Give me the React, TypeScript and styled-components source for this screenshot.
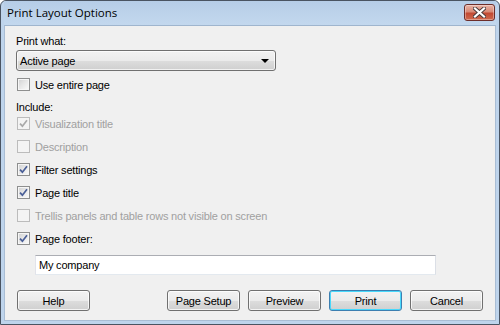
import React, { useState } from 'react';
import styled, { createGlobalStyle } from 'styled-components';

const GlobalStyle = createGlobalStyle`
  html, body {
    margin: 0;
    padding: 0;
    background: #ffffff;
  }
  * {
    box-sizing: border-box;
  }
`;

const Window = styled.div`
  width: 500px;
  height: 325px;
  display: flex;
  flex-direction: column;
  border: 1px solid #4a5462;
  border-radius: 6px 6px 0 0;
  background: #bed4ec;
  padding: 0 3px 3px 3px;
  font-family: 'Liberation Sans', Arial, sans-serif;
  font-size: 11px;
  letter-spacing: -0.2px;
  color: #000;
  overflow: hidden;
`;

const TitleBar = styled.div`
  height: 24px;
  display: flex;
  align-items: center;
  justify-content: space-between;
  background: linear-gradient(#b6cde7, #c3d8ee);
  padding: 0 0 0 3px;
`;

const Title = styled.span`
  font-family: 'Open Sans', 'Noto Sans', sans-serif;
  font-size: 11.5px;
  letter-spacing: 0;
  color: #000;
  margin-top: -1px;
`;

const CloseButton = styled.button`
  width: 31px;
  height: 17px;
  margin: -2px 1px 0 0;
  padding: 0;
  display: flex;
  align-items: center;
  justify-content: center;
  border: 1px solid #6d2e2a;
  border-radius: 3px;
  background: linear-gradient(#e9b3a6 0%, #d88a76 45%, #c24a33 55%, #cf6a4f 100%);
  box-shadow: inset 0 0 0 1px rgba(255, 255, 255, 0.35);
`;

const Panel = styled.div`
  flex: 1;
  display: flex;
  flex-direction: column;
  background: #f0f0f0;
  padding: 9px 12px 0 11px;
  border: 1px solid #a9bdd4;
  border-top-color: #9fb5ce;
`;

const Caption = styled.div<{ $top?: number }>`
  height: 13px;
  line-height: 13px;
  margin-top: ${p => p.$top ?? 0}px;
  white-space: nowrap;
`;

const Combo = styled.div`
  width: 260px;
  height: 21px;
  margin-top: 2px;
  display: flex;
  align-items: center;
  justify-content: space-between;
  padding: 0 6px 0 3px;
  border: 1px solid #707070;
  border-radius: 3px;
  background: linear-gradient(#f2f2f2 0%, #ebebeb 50%, #dddddd 51%, #cfcfcf 100%);
  box-shadow: inset 0 0 0 1px rgba(255, 255, 255, 0.7);
`;

const Arrow = styled.span`
  width: 0;
  height: 0;
  border-left: 4px solid transparent;
  border-right: 4px solid transparent;
  border-top: 4px solid #000;
  margin-top: 1px;
`;

const CheckList = styled.div<{ $top: number }>`
  display: flex;
  flex-direction: column;
  gap: 10px;
  margin-top: ${p => p.$top}px;
`;

const Row = styled.label<{ $disabled?: boolean }>`
  height: 13px;
  display: flex;
  align-items: center;
  gap: 5px;
  padding-left: 1px;
  color: ${p => (p.$disabled ? '#a0a0a0' : '#000')};
  white-space: nowrap;
`;

const Box = styled.span<{ $disabled?: boolean }>`
  width: 13px;
  height: 13px;
  flex: none;
  display: flex;
  align-items: center;
  justify-content: center;
  border: 1px solid ${p => (p.$disabled ? '#bcbcbc' : '#8e8f8f')};
  background: ${p =>
    p.$disabled
      ? '#f4f4f4'
      : 'linear-gradient(135deg, #cfd0d1 0%, #e6e6e6 45%, #fbfbfb 100%)'};
  box-shadow: inset 0 0 0 1px ${p => (p.$disabled ? '#f4f4f4' : '#f6f6f6')};
`;

const FooterInput = styled.input`
  width: 401px;
  height: 20px;
  margin: 10px 0 0 19px;
  padding: 0 3px;
  border: 1px solid #abadb3;
  border-left-color: #e2e3ea;
  border-right-color: #dbdfe6;
  border-bottom-color: #e3e9ef;
  background: #fff;
  font-family: 'Liberation Sans', Arial, sans-serif;
  font-size: 11px;
  letter-spacing: -0.2px;
  color: #000;
  outline: none;
`;

const ButtonRow = styled.div`
  display: flex;
  justify-content: space-between;
  margin-top: 15px;
  padding-left: 1px;
`;

const ButtonGroup = styled.div`
  display: flex;
  gap: 8px;
`;

const Button = styled.button<{ $default?: boolean }>`
  width: 73px;
  height: 21px;
  padding: 0;
  border: 1px solid ${p => (p.$default ? '#3c7fb1' : '#707070')};
  border-radius: 3px;
  background: linear-gradient(#f2f2f2 0%, #ebebeb 50%, #dddddd 51%, #cfcfcf 100%);
  box-shadow: inset 0 0 0 1px ${p => (p.$default ? '#48d8fb' : 'rgba(255, 255, 255, 0.75)')};
  font-family: 'Liberation Sans', Arial, sans-serif;
  font-size: 11px;
  letter-spacing: -0.2px;
  color: #000;
`;

function Check({ checked, disabled }: { checked: boolean; disabled?: boolean }) {
  return (
    <Box $disabled={disabled}>
      {checked && (
        <svg width="9" height="9" viewBox="0 0 9 9">
          <path
            d="M1 4.6 L3.4 7.2 L8 1.2"
            fill="none"
            stroke={disabled ? '#a9a9a9' : '#4a5f97'}
            strokeWidth="1.7"
          />
        </svg>
      )}
    </Box>
  );
}

const includes = [
  { label: 'Visualization title', checked: true, disabled: true },
  { label: 'Description', checked: false, disabled: true },
  { label: 'Filter settings', checked: true },
  { label: 'Page title', checked: true },
  { label: 'Trellis panels and table rows not visible on screen', checked: false, disabled: true },
  { label: 'Page footer:', checked: true },
];

export default function App() {
  const [footer, setFooter] = useState('My company');
  return (
    <>
      <GlobalStyle />
      <Window>
        <TitleBar>
          <Title>Print Layout Options</Title>
          <CloseButton aria-label="Close">
            <svg width="13" height="11" viewBox="0 0 13 11">
              <path
                d="M2 1.5 L11 9.5 M11 1.5 L2 9.5"
                stroke="#4a3b3b"
                strokeWidth="4"
                strokeLinecap="square"
              />
              <path
                d="M2 1.5 L11 9.5 M11 1.5 L2 9.5"
                stroke="#ffffff"
                strokeWidth="2.2"
                strokeLinecap="square"
              />
            </svg>
          </CloseButton>
        </TitleBar>
        <Panel>
          <Caption>Print what:</Caption>
          <Combo>
            <span>Active page</span>
            <Arrow />
          </Combo>
          <CheckList $top={7}>
            <Row>
              <Check checked={false} />
              Use entire page
            </Row>
          </CheckList>
          <Caption $top={10}>Include:</Caption>
          <CheckList $top={3}>
            {includes.map(item => (
              <Row key={item.label} $disabled={item.disabled}>
                <Check checked={item.checked} disabled={item.disabled} />
                {item.label}
              </Row>
            ))}
          </CheckList>
          <FooterInput value={footer} onChange={e => setFooter(e.target.value)} />
          <ButtonRow>
            <Button>Help</Button>
            <ButtonGroup>
              <Button>Page Setup</Button>
              <Button>Preview</Button>
              <Button $default>Print</Button>
              <Button>Cancel</Button>
            </ButtonGroup>
          </ButtonRow>
        </Panel>
      </Window>
    </>
  );
}
